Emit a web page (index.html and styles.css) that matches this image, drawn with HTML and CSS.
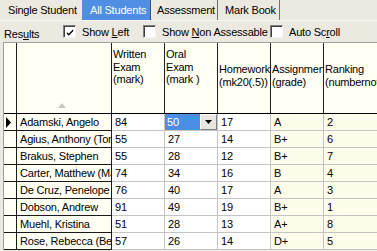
FILE: index.html
```html
<!DOCTYPE html>
<html>
<head>
<meta charset="utf-8">
<link rel="stylesheet" href="styles.css">
</head>
<body>
<div class="tabs">
  <div class="tab tab-single">Single Student</div>
  <div class="tab tab-all active">All Students</div>
  <div class="tab tab-assess">Assessment</div>
  <div class="tab tab-mark">Mark Book</div>
</div>
<div class="options">
  <div class="results">Res<u>u</u>lts</div>
  <label class="opt opt-left"><span class="box"><svg width="11" height="11" viewBox="0 0 11 11"><path d="M2 5 L4 7 L9 2 L9 4 L4 9 L2 7 Z" fill="#000"/></svg></span><span class="lbl">Show <u>L</u>eft</span></label>
  <label class="opt opt-non"><span class="box"></span><span class="lbl">Show <u>N</u>on Assessable</span></label>
  <label class="opt"><span class="box"></span><span class="lbl">Auto Sc<u>r</u>oll</span></label>
</div>
<div class="grid">
  <div class="row head">
    <div class="c ind"></div>
    <div class="c name"><svg class="sort" width="8" height="5" viewBox="0 0 8 5"><path d="M0 5 L4 0 L8 5 Z" fill="#c8c8c0"/></svg></div>
    <div class="c">Written<br>Exam<br>(mark)</div>
    <div class="c">Oral<br>Exam<br>(mark )</div>
    <div class="c two">Homework<br>(mk20(.5))</div>
    <div class="c two">Assignment<br>(grade)</div>
    <div class="c two">Ranking<br>(numbernote)</div>
  </div>
  <div class="row">
    <div class="c ind"><svg width="7" height="11" viewBox="0 0 7 11"><path d="M1 0 L6 5.5 L1 11 Z" fill="#000"/></svg></div>
    <div class="c name">Adamski, Angelo</div>
    <div class="c w">84</div>
    <div class="c w sel"><span class="selval">50</span><span class="dd"><svg width="7" height="4" viewBox="0 0 7 4"><path d="M0 0 L7 0 L3.5 4 Z" fill="#000"/></svg></span></div>
    <div class="c w">17</div>
    <div class="c y">A</div>
    <div class="c y">2</div>
  </div>
  <div class="row">
    <div class="c ind"></div>
    <div class="c name">Agius, Anthony (Tony)</div>
    <div class="c w">55</div>
    <div class="c w">27</div>
    <div class="c w">14</div>
    <div class="c y">B+</div>
    <div class="c y">6</div>
  </div>
  <div class="row">
    <div class="c ind"></div>
    <div class="c name">Brakus, Stephen</div>
    <div class="c w">55</div>
    <div class="c w">28</div>
    <div class="c w">12</div>
    <div class="c y">B+</div>
    <div class="c y">7</div>
  </div>
  <div class="row">
    <div class="c ind"></div>
    <div class="c name">Carter, Matthew (Matt)</div>
    <div class="c w">74</div>
    <div class="c w">34</div>
    <div class="c w">16</div>
    <div class="c y">B</div>
    <div class="c y">4</div>
  </div>
  <div class="row">
    <div class="c ind"></div>
    <div class="c name">De Cruz, Penelope</div>
    <div class="c w">76</div>
    <div class="c w">40</div>
    <div class="c w">17</div>
    <div class="c y">A</div>
    <div class="c y">3</div>
  </div>
  <div class="row">
    <div class="c ind"></div>
    <div class="c name">Dobson, Andrew</div>
    <div class="c w">91</div>
    <div class="c w">49</div>
    <div class="c w">19</div>
    <div class="c y">B+</div>
    <div class="c y">1</div>
  </div>
  <div class="row">
    <div class="c ind"></div>
    <div class="c name">Muehl, Kristina</div>
    <div class="c w">51</div>
    <div class="c w">28</div>
    <div class="c w">13</div>
    <div class="c y">A+</div>
    <div class="c y">8</div>
  </div>
  <div class="row">
    <div class="c ind"></div>
    <div class="c name">Rose, Rebecca (Becky)</div>
    <div class="c w">57</div>
    <div class="c w">26</div>
    <div class="c w">14</div>
    <div class="c y">D+</div>
    <div class="c y">5</div>
  </div>
</div>
</body>
</html>
```
FILE: styles.css
```css
html, body {
  margin: 0;
  padding: 0;
  background: #ece9e0;
  overflow: hidden;
  width: 377px;
  height: 251px;
}
body {
  font-family: "Liberation Sans", Arial, sans-serif;
  font-size: 11px;
  letter-spacing: -0.2px;
  color: #000;
}
.tabs {
  display: flex;
  height: 20px;
  border-bottom: 1px solid #f8f8f8;
}
.tab {
  line-height: 20px;
  height: 20px;
  box-sizing: border-box;
  padding-left: 8px;
  border-right: 1px solid #707070;
  white-space: nowrap;
}
.tab-single { width: 82px; border-right-color: transparent; }
.tab-all { width: 69px; }
.tab-assess { width: 67px; padding-left: 6px; }
.tab-mark { width: 62px; padding-left: 7px; }
.tab.active {
  background: #4f8ee3;
  color: #fff;
  border-right-color: #40506a;
}
.options {
  display: flex;
  align-items: center;
  height: 21px;
  padding-left: 4px;
}
.results {
  width: 59px;
  padding-top: 4px;
}
.opt {
  display: flex;
  align-items: center;
  white-space: nowrap;
}
.lbl { white-space: pre; }
.opt-left { width: 80px; }
.opt-non { width: 127px; }
.box {
  width: 13px;
  height: 13px;
  box-sizing: border-box;
  background: #fff;
  border: 1px solid;
  border-color: #808080 #f4f4f4 #f4f4f4 #808080;
  box-shadow: inset 1px 1px 0 #404040;
  margin-right: 6px;
  display: flex;
  align-items: center;
  justify-content: center;
}
.box svg { display: block; margin: 1px 0 0 1px; }
.grid {
  margin-left: 3px;
  border-left: 1px solid #a0a0a0;
  border-top: 1px solid #a0a0a0;
  width: 420px;
}
.row {
  display: grid;
  grid-template-columns: 13px 95px 53px 53px 53px 53px 60px;
  height: 17px;
}
.c {
  box-sizing: border-box;
  border-right: 1px solid #c4c4c4;
  border-bottom: 1px solid #c4c4c4;
  padding-left: 3px;
  line-height: 16px;
  white-space: nowrap;
  overflow: hidden;
  position: relative;
}
.ind {
  background: #fffff4;
  border-right-color: #1a1a1a;
  border-bottom-color: #1a1a1a;
  padding-left: 1px;
  display: flex;
  align-items: center;
}
.ind svg { display: block; }
.name {
  background: #fffff4;
  border-right-color: #1a1a1a;
  border-bottom-color: #1a1a1a;
}
.w { background: #fff; }
.y { background: #fefcea; }
.head {
  height: 71px;
}
.head .c {
  background: #fffff4;
  border-right: 1px solid #202020;
  border-bottom: 1px solid #000;
  line-height: 12.5px;
  padding-top: 5px;
  padding-left: 1px;
}
.head .c.two { padding-top: 20px; }
.sort {
  position: absolute;
  left: 41px;
  bottom: 5px;
}
.sel {
  padding: 0;
  display: flex;
}
.selval {
  flex: 1;
  background: #4a8ee6;
  color: #fff;
  padding-left: 2px;
  outline: 1px dotted #c08020;
  outline-offset: -1px;
}
.dd {
  width: 17px;
  background: #e8e6de;
  border: 1px solid;
  border-color: #fff #808080 #808080 #fff;
  box-sizing: border-box;
  display: flex;
  align-items: center;
  justify-content: center;
}
.dd svg { display: block; }
```
